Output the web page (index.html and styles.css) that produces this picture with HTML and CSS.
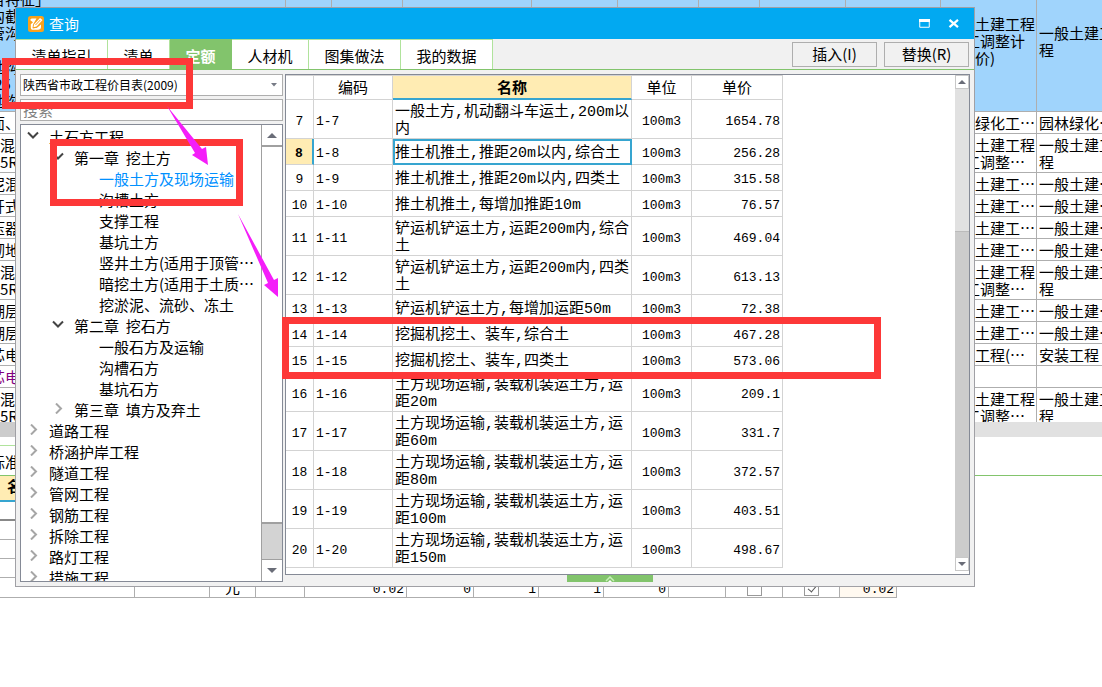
FILE: index.html
```html
<!DOCTYPE html>
<html lang="zh-CN">
<head>
<meta charset="utf-8">
<title>查询</title>
<link rel="stylesheet" href="styles.css">
</head>
<body>
<main class="desktop">
  <section class="workspace">
    <div class="sheet-view">
      <table class="sheet">
        <colgroup><col class="s286"><col class="s46"><col class="s71"><col class="s129"><col class="s86"><col class="s81"><col class="s61"><col class="s86"><col class="s95"><col class="s96"><col></colgroup>
        <tbody>
        <tr class="picked"><td><div class="cut top">目特征」<br>沟截<br>管沟<br><br>地沟<br>.25<br>地沟</div></td><td></td><td></td><td></td><td></td><td></td><td></td><td></td><td></td><td class="under"><div class="pull">一般土建工程<br>(人工调整计<br>定额价)</div></td><td>一般土建工<br>程</td></tr>
        <tr class="one"><td><div class="cut">面、</div></td><td colspan="8"></td><td class="under"><div class="pull">园林绿化工…</div></td><td>园林绿化…</td></tr>
        <tr class="two"><td><div>混<br>5R</div></td><td colspan="8"></td><td class="under"><div class="pull">一般土建工程<br>(人工调整…</div></td><td>一般土建工<br>程</td></tr>
        <tr class="one"><td><div class="cut">泥混</div></td><td colspan="8"></td><td class="under"><div class="pull">一般土建工…</div></td><td>一般土建…</td></tr>
        <tr class="one"><td><div class="cut">开式</div></td><td colspan="8"></td><td class="under"><div class="pull">一般土建工…</div></td><td>一般土建…</td></tr>
        <tr class="one"><td><div class="cut">压器</div></td><td colspan="8"></td><td class="under"><div class="pull">一般土建工…</div></td><td>一般土建…</td></tr>
        <tr class="one"><td><div class="cut">砌地</div></td><td colspan="8"></td><td class="under"><div class="pull">一般土建工…</div></td><td>一般土建…</td></tr>
        <tr class="two"><td><div>混<br>5R</div></td><td colspan="8"></td><td class="under"><div class="pull">一般土建工程<br>(人工调整…</div></td><td>一般土建工<br>程</td></tr>
        <tr class="one"><td><div class="cut">潮层</div></td><td colspan="8"></td><td class="under"><div class="pull">一般土建工…</div></td><td>一般土建…</td></tr>
        <tr class="one"><td><div class="cut">潮层</div></td><td colspan="8"></td><td class="under"><div class="pull">一般土建工…</div></td><td>一般土建…</td></tr>
        <tr class="one"><td><div class="cut">芯电</div></td><td colspan="8"></td><td class="under"><div class="pull">安装工程(…</div></td><td>安装工程</td></tr>
        <tr class="one"><td><div class="cut purple">芯电</div></td><td colspan="8"></td><td></td><td></td></tr>
        <tr class="two"><td><div>混<br>5R</div></td><td colspan="8"></td><td class="under"><div class="pull">一般土建工程<br>(人工调整…</div></td><td>一般土建工<br>程</td></tr>
        </tbody>
      </table>
    </div>
    <div class="sheet-scroll"><span></span></div>
    <div class="detail-tabs"><span class="detail-tab">标准换算</span></div>
    <table class="detail">
      <colgroup><col class="s135"><col class="s75"><col class="s46"><col class="s49"><col class="s102"><col class="s67"><col class="s65"><col class="s65"><col class="s65"><col class="s57"><col class="s57"><col class="s57"><col class="s57"></colgroup>
      <thead><tr><th>名称</th><th colspan="12"></th></tr></thead>
      <tbody>
      <tr class="dark"><td colspan="13"></td></tr>
      <tr><td colspan="13"></td></tr>
      <tr><td colspan="13"></td></tr>
      <tr><td colspan="13"></td></tr>
      <tr class="values"><td></td><td></td><td class="mid">元</td><td></td><td>0.02</td><td>0</td><td>1</td><td>1</td><td>0</td><td></td><td class="mid"><input type="checkbox" class="tick" aria-label="暂估"></td><td class="mid"><input type="checkbox" class="tick" checked aria-label="计价"></td><td class="warm">0.02</td></tr>
      </tbody>
    </table>
  </section>

  <section class="dialog" role="dialog" aria-labelledby="dialog-title">
    <header class="titlebar">
      <svg class="logo" viewBox="0 0 16 16" aria-hidden="true"><rect width="16" height="16" rx="2.500" fill="#f9a11b"/><path d="M8.500 2.500H4C2.700 2.500 2 3.500 2.600 4.600L5 6.200 2.800 8.200V11.500C2.800 13 3.600 13.800 5 13.800H9.800C11.800 13.800 13 12.800 13 11V8.500L9 11.800 4.500 12.200 5 8.500Z" fill="#fff"/><path d="M5.500 11.300 6 8.500 12 2 14.500 4 8.600 10.500Z" fill="#fff"/><path d="M7.500 9 12.300 4M5 11.900l3.800-.6" stroke="#f9a11b" fill="none"/></svg>
      <h1 id="dialog-title">查询</h1>
      <button class="win" aria-label="最大化"><svg viewBox="0 0 12 10"><path d="M.75.750h9.500v7.500H.75z" fill="none" stroke="#fff"/><path d="M0 0h11v3H0z" fill="#fff"/></svg></button>
      <button class="win" aria-label="关闭"><svg viewBox="0 0 12 10"><path d="M1.500.8 10 8.200M10 .8 1.500 8.200" stroke="#fff" stroke-width="2.200"/></svg></button>
    </header>
    <nav class="tabs">
      <button class="tab w92">清单指引</button><button class="tab w62">清单</button><button class="tab active">定额</button><button class="tab w77">人材机</button><button class="tab w92">图集做法</button><button class="tab w92">我的数据</button>
      <div class="actions"><button class="action">插入(I)</button><button class="action">替换(R)</button></div>
    </nav>
    <div class="panes">
      <aside class="side">
        <div class="picker">
          <select aria-label="定额库"><option>陕西省市政工程价目表(2009)</option></select>
          <svg viewBox="0 0 6 4" aria-hidden="true"><path d="M0 0h6L3 3.500z" fill="#777b86"/></svg>
        </div>
        <input class="search" type="text" placeholder="搜索" aria-label="搜索">
        <div class="tree">
          <ul class="nodes">
            <li class="l0"><svg viewBox="0 0 12 9"><path d="M1 1.500 6 6.500l5-5" class="open"/></svg>土石方工程</li>
            <li class="l1"><svg viewBox="0 0 12 9"><path d="M1 1.500 6 6.500l5-5" class="open"/></svg>第一章&nbsp;&nbsp;挖土方</li>
            <li class="l2 chosen">一般土方及现场运输</li>
            <li class="l2">沟槽土方</li>
            <li class="l2">支撑工程</li>
            <li class="l2">基坑土方</li>
            <li class="l2">竖井土方(适用于顶管…</li>
            <li class="l2">暗挖土方(适用于土质…</li>
            <li class="l2">挖淤泥、流砂、冻土</li>
            <li class="l1"><svg viewBox="0 0 12 9"><path d="M1 1.500 6 6.500l5-5" class="open"/></svg>第二章&nbsp;&nbsp;挖石方</li>
            <li class="l2">一般石方及运输</li>
            <li class="l2">沟槽石方</li>
            <li class="l2">基坑石方</li>
            <li class="l1"><svg viewBox="0 0 12 11"><path d="m4 .5 5 5-5 5" class="shut"/></svg>第三章&nbsp;&nbsp;填方及弃土</li>
            <li class="l0"><svg viewBox="0 0 12 11"><path d="m4 .5 5 5-5 5" class="shut"/></svg>道路工程</li>
            <li class="l0"><svg viewBox="0 0 12 11"><path d="m4 .5 5 5-5 5" class="shut"/></svg>桥涵护岸工程</li>
            <li class="l0"><svg viewBox="0 0 12 11"><path d="m4 .5 5 5-5 5" class="shut"/></svg>隧道工程</li>
            <li class="l0"><svg viewBox="0 0 12 11"><path d="m4 .5 5 5-5 5" class="shut"/></svg>管网工程</li>
            <li class="l0"><svg viewBox="0 0 12 11"><path d="m4 .5 5 5-5 5" class="shut"/></svg>钢筋工程</li>
            <li class="l0"><svg viewBox="0 0 12 11"><path d="m4 .5 5 5-5 5" class="shut"/></svg>拆除工程</li>
            <li class="l0"><svg viewBox="0 0 12 11"><path d="m4 .5 5 5-5 5" class="shut"/></svg>路灯工程</li>
            <li class="l0"><svg viewBox="0 0 12 11"><path d="m4 .5 5 5-5 5" class="shut"/></svg>措施工程</li>
          </ul>
          <div class="bar">
            <button aria-label="向上滚动"><svg viewBox="0 0 10 5"><path d="M0 5h10L5 0z" fill="#6a6d78"/></svg></button>
            <div class="bar-thumb"></div><div class="bar-track"></div>
            <button class="down" aria-label="向下滚动"><svg viewBox="0 0 10 5"><path d="M0 0h10L5 5z" fill="#6a6d78"/></svg></button>
          </div>
        </div>
      </aside>
      <div class="results">
        <div class="frame">
          <div class="table-area">
          <table class="quota">
            <colgroup><col class="c-no"><col class="c-code"><col class="c-name"><col class="c-unit"><col class="c-price"></colgroup>
            <thead><tr><th></th><th>编码</th><th class="sorted">名称</th><th>单位</th><th>单价</th></tr></thead>
            <tbody>
            <tr class="tall"><td>7</td><td>1-7</td><td>一般土方,机动翻斗车运土,200m以<br>内</td><td>100m3</td><td>1654.78</td></tr>
            <tr class="current"><td>8</td><td>1-8</td><td>推土机推土,推距20m以内,综合土</td><td>100m3</td><td>256.28</td></tr>
            <tr><td>9</td><td>1-9</td><td>推土机推土,推距20m以内,四类土</td><td>100m3</td><td>315.58</td></tr>
            <tr><td>10</td><td>1-10</td><td>推土机推土,每增加推距10m</td><td>100m3</td><td>76.57</td></tr>
            <tr class="tall"><td>11</td><td>1-11</td><td>铲运机铲运土方,运距200m内,综合<br>土</td><td>100m3</td><td>469.04</td></tr>
            <tr class="tall"><td>12</td><td>1-12</td><td>铲运机铲运土方,运距200m内,四类<br>土</td><td>100m3</td><td>613.13</td></tr>
            <tr><td>13</td><td>1-13</td><td>铲运机铲运土方,每增加运距50m</td><td>100m3</td><td>72.38</td></tr>
            <tr><td>14</td><td>1-14</td><td>挖掘机挖土、装车,综合土</td><td>100m3</td><td>467.28</td></tr>
            <tr><td>15</td><td>1-15</td><td>挖掘机挖土、装车,四类土</td><td>100m3</td><td>573.06</td></tr>
            <tr class="tall"><td>16</td><td>1-16</td><td>土方现场运输,装载机装运土方,运<br>距20m</td><td>100m3</td><td>209.1</td></tr>
            <tr class="tall"><td>17</td><td>1-17</td><td>土方现场运输,装载机装运土方,运<br>距60m</td><td>100m3</td><td>331.7</td></tr>
            <tr class="tall"><td>18</td><td>1-18</td><td>土方现场运输,装载机装运土方,运<br>距80m</td><td>100m3</td><td>372.57</td></tr>
            <tr class="tall"><td>19</td><td>1-19</td><td>土方现场运输,装载机装运土方,运<br>距100m</td><td>100m3</td><td>403.51</td></tr>
            <tr class="tall"><td>20</td><td>1-20</td><td>土方现场运输,装载机装运土方,运<br>距150m</td><td>100m3</td><td>498.67</td></tr>
            </tbody>
          </table>
          </div>
          <div class="slim">
            <button aria-label="向上滚动"><svg viewBox="0 0 8 4"><path d="M0 4h8L4 0z" fill="#6a6d78"/></svg></button>
            <div class="slim-track"></div><div class="slim-thumb"></div>
            <button aria-label="向下滚动"><svg viewBox="0 0 8 4"><path d="M0 0h8L4 4z" fill="#6a6d78"/></svg></button>
          </div>
        </div>
        <button class="expander" aria-label="展开"><svg viewBox="0 0 10 6"><path d="m1 5 4-4 4 4" fill="none" stroke="#c8f0b8" stroke-width="1.500"/><path d="M3 6 5 4l2 2z" fill="#fff"/></svg></button>
      </div>
    </div>
  </section>

  <div class="mark mark-library"></div>
  <div class="mark mark-chapter"></div>
  <div class="mark mark-rows"></div>
  <svg class="arrows" width="300" height="310" viewBox="0 0 300 310" aria-hidden="true"><path d="M167 106 202 149 206 147 208 165 192 155 195 153ZM238 214 274 280 278 278V297L264 285 268 283Z" fill="#f41ef9"/></svg>
</main>
</body>
</html>
```
FILE: styles.css
```css
* { box-sizing: border-box; }
body { margin: 0; background: #fff; color: #000; font: 15px/17px "Noto Sans CJK SC", "Liberation Sans", sans-serif; overflow: hidden; }
button, input, select { font: inherit; color: inherit; margin: 0; padding: 0; border-radius: 0; }
svg { display: block; }
.desktop { position: relative; min-height: 100vh; overflow: hidden; }

.s286 { width: 286px; } .s135 { width: 135px; } .s129 { width: 129px; } .s102 { width: 102px; }
.s96 { width: 96px; } .s95 { width: 95px; } .s86 { width: 86px; } .s81 { width: 81px; }
.s75 { width: 75px; } .s71 { width: 71px; } .s67 { width: 67px; } .s65 { width: 65px; }
.s61 { width: 61px; } .s57 { width: 57px; } .s49 { width: 49px; } .s46 { width: 46px; }

/* spreadsheet behind the dialog */
.sheet-view { height: 422px; overflow: hidden; }
.sheet { width: 100%; table-layout: fixed; border-collapse: separate; border-spacing: 0; white-space: nowrap; }
.sheet td { padding: 0; border-right: 1px solid #aeaeae; border-bottom: 1px solid #aeaeae; overflow: hidden; }
.sheet td:last-child { padding-left: 2px; border-right: 0; }
.sheet .under { padding-left: 4px; }
.picked { height: 112px; background: #a0d4fc; }
.picked td { vertical-align: top; }
.picked td:nth-last-child(-n+2) { padding-top: 15px; }
.picked td:last-child { padding-top: 24px; }
.one { height: 22px; }
.two { height: 39px; }
.cut { margin-left: -10px; }
.top { margin-top: -10px; }
.purple { color: #800080; }
.sheet-scroll { display: flex; height: 15px; background: #e1e1e1; }
.sheet-scroll span { width: 50%; background: #ccc; }
.detail-tabs { display: flex; height: 39px; padding-top: 8px; border-bottom: 1px solid #82c46c; }
.detail-tab { flex: 0 0 80px; margin-left: -10px; padding-top: 7px; border-top: 1px solid #b0e39c; }
.detail { width: 897px; table-layout: fixed; border-collapse: separate; border-spacing: 0; font: 13px/17px "Liberation Mono", "Noto Sans CJK SC", monospace; }
.detail th { height: 26px; padding: 0 0 0 7px; text-align: left; font-size: 15px; background: #ffecb3; border-bottom: 2px solid #36a5d0; }
.detail th + th { background: #fff; }
.detail td { height: 19px; padding: 0 2px 0 0; line-height: 15px; text-align: right; border-right: 1px solid #aeaeae; border-bottom: 1px solid #aeaeae; }
.detail .dark td { border-bottom: 2px solid #888; }
.detail .mid { padding: 0; text-align: center; font-size: 15px; }
.detail .values td { height: 20px; vertical-align: bottom; }
.detail .warm { background: #fff9f0; }
.tick { appearance: none; display: block; width: 15px; height: 15px; margin: 0 auto 1px; background: #fff; border: 1px solid #999; }
.tick:checked::after { content: ""; display: block; width: 4px; height: 8px; margin: 1px 0 0 5px; border: solid #555; border-width: 0 1px 1px 0; transform: rotate(40deg); }

/* dialog window */
.dialog { position: absolute; top: 7px; left: 15px; right: 127px; background: #f1f1f1; border: 1px solid #a0a0a5; }
.titlebar { display: flex; align-items: center; height: 31px; padding: 0 6px 0 12px; background: #02a9f1; color: #fff; }
.logo { width: 16px; height: 16px; }
.titlebar h1 { flex: 1; margin: 0; padding-left: 5px; font-size: 15px; font-weight: 400; }
.win { width: 29px; height: 20px; border: 0; background: none; display: flex; align-items: center; justify-content: center; }
.win svg { width: 12px; height: 10px; }
.tabs { display: flex; height: 31px; border-bottom: 1px solid #82c46c; }
.tab { flex: none; width: 62px; padding-top: 2px; border: 0; border-top: 1px solid #b0e39c; border-right: 1px solid #b0e39c; background: #fff; }
.w92 { width: 92px; } .w77 { width: 77px; }
.active { background: #82c46c; color: #fff; font-weight: 700; border-color: #82c46c; }
.actions { display: flex; gap: 7px; margin: 3px 5px 2px auto; }
.action { width: 85px; padding-bottom: 2px; border: 1px solid #aeaeae; background: #f1f1f1; }
.panes { display: flex; gap: 2px; padding: 4px 4px; }
.side { display: flex; flex-direction: column; gap: 3px; flex: 0 0 263px; }
.picker { display: grid; height: 22px; flex: none; }
.picker > * { grid-area: 1 / 1; }
.picker select { appearance: none; width: 100%; padding: 0 0 2px 2px; border: 1px solid #aeaeae; background: #fff; font-size: 12px; }
.picker svg { width: 6px; height: 4px; margin-right: 6px; place-self: center end; pointer-events: none; }
.search { height: 22px; flex: none; padding: 0 2px 2px; border: 1px solid #aeaeae; background: #fff; }
.search::placeholder { color: #808080; opacity: 1; }
.tree { display: flex; flex-grow: 1; height: 0; border: 1px solid #858a96; background: #fff; overflow: hidden; }
.nodes { flex: 1; min-width: 0; margin: 0; padding: 1px 0 0; list-style: none; white-space: nowrap; }
.nodes li { display: flex; align-items: center; height: 21px; line-height: 21px; }
.nodes svg { width: 12px; height: 11px; margin: 0 10px 2px 0; }
.l0 { padding-left: 6px; } .l1 { padding-left: 31px; } .l2 { padding-left: 78px; }
.chosen { color: #0090ff; }
.open { fill: none; stroke: #444; stroke-width: 2; }
.shut { fill: none; stroke: #a6a6a6; stroke-width: 2; }
.bar { display: flex; flex-direction: column; flex: 0 0 21px; border-left: 1px solid #a0a0a0; background: #d3d3d3; }
.bar button { display: flex; align-items: center; justify-content: center; flex: 0 0 22px; border: 0; border-bottom: 2px solid #a0a0a0; background: #fff; }
.bar .down { border-bottom: 0; border-top: 1px solid #a0a0a0; }
.bar svg { width: 10px; height: 5px; }
.bar-thumb { flex: 379; background: #fff; border-bottom: 2px solid #a0a0a0; }
.bar-track { flex: 35; }

.results { display: flex; flex-direction: column; flex: 1; min-width: 0; }
.frame { display: flex; border: 1px solid #858a96; background: #fff; }
.table-area { flex: 1; min-width: 0; padding-bottom: 6px; }
.quota { width: 497px; table-layout: fixed; border-collapse: separate; border-spacing: 0; white-space: nowrap; border-top: 1px solid #d3d3d3; }
.c-no { width: 28px; } .c-code { width: 79px; } .c-name { width: 239px; } .c-unit { width: 60px; } .c-price { width: 91px; }
.quota th { height: 24px; padding: 0 0 2px; font-weight: 400; border-right: 1px solid #d3d3d3; border-bottom: 1px solid #d3d3d3; }
.quota .sorted { font-weight: 700; background: #ffecb3; border-bottom: 2px solid #36a5d0; }
.quota td { height: 26px; padding: 4px 2px 0; border-right: 1px solid #d3d3d3; border-bottom: 1px solid #d3d3d3; font: 13px/17px "Liberation Mono", "Noto Sans CJK SC", monospace; }
.quota .tall td { height: 39px; }
.quota td:nth-child(1), .quota td:nth-child(4) { text-align: center; padding-right: 0; padding-left: 0; }
.quota td:nth-child(3) { font-size: 15px; }
.quota td:nth-child(5) { text-align: right; }
.current td:first-child { font-weight: 700; background: #ffecb3; border-right: 2px solid #36a5d0; }
.current td:nth-child(3) { outline: 2px solid #36a5d0; outline-offset: -2px; }
.slim { display: flex; flex-direction: column; flex: 0 0 14px; margin-bottom: 3px; background: #e1e1e1; }
.slim button { display: flex; align-items: center; justify-content: center; flex: 0 0 14px; border: 1px solid #c8c8c8; background: #fff; }
.slim svg { width: 8px; height: 4px; }
.slim-track { flex: 142; } .slim-thumb { flex: 325; background: #ccc; border-top: 1px solid #bbb; }
.expander { display: flex; justify-content: center; align-items: flex-end; align-self: center; width: 86px; height: 7px; margin-right: 36px; border: 0; background: #82c46c; }
.expander svg { width: 10px; height: 6px; }

/* annotations drawn over the window */
.mark { position: absolute; border: 7px solid #fd3838; pointer-events: none; }
.mark-library { left: 2px; top: 58px; width: 191px; height: 51px; }
.mark-chapter { left: 50px; top: 139px; width: 193px; height: 67px; }
.mark-rows { left: 282px; top: 317px; width: 599px; height: 62px; }
.arrows { position: absolute; left: 0; top: 0; pointer-events: none; }
```
